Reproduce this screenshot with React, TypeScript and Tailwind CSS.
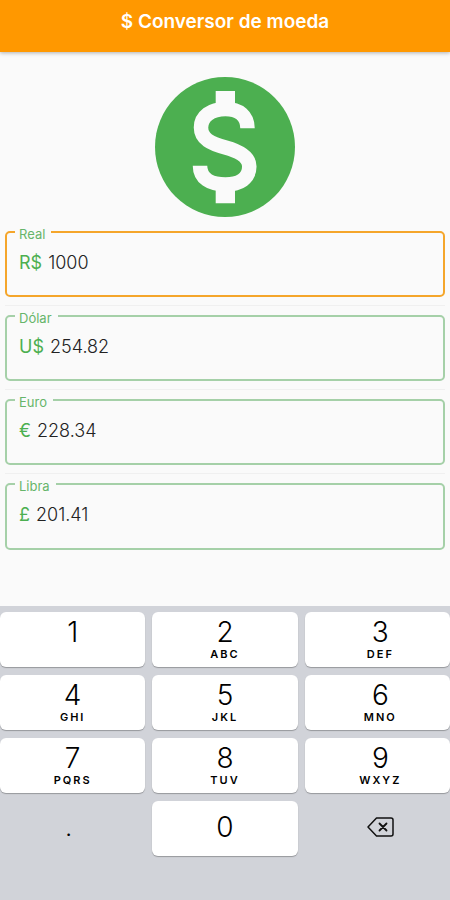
import React, { useState } from "react";
import clsx from "clsx";

const fields = [
  { id: "real", label: "Real", prefix: "R$", value: "1000" },
  { id: "dolar", label: "Dólar", prefix: "U$", value: "254.82" },
  { id: "euro", label: "Euro", prefix: "€", value: "228.34" },
  { id: "libra", label: "Libra", prefix: "£", value: "201.41" },
];

const keys = [
  { digit: "1", letters: "" },
  { digit: "2", letters: "ABC" },
  { digit: "3", letters: "DEF" },
  { digit: "4", letters: "GHI" },
  { digit: "5", letters: "JKL" },
  { digit: "6", letters: "MNO" },
  { digit: "7", letters: "PQRS" },
  { digit: "8", letters: "TUV" },
  { digit: "9", letters: "WXYZ" },
];

function MoneyIcon() {
  return (
    <svg viewBox="0 0 140 140" className="w-[140px] h-[140px]" aria-hidden="true">
      <circle cx="70" cy="70" r="70" fill="#4caf50" />
      <path d="M60.7 14H80V31H60.7zM60.7 108H80V126.3H60.7z" fill="#fafafa" />
      <path
        d="M92.5 51.3C92.5 39 84 32 70.500 32C56 32 46 39.5 46 50.5C46 62 56 66.5 70.5 70.5C85 74.5 94.3 80 94.3 89.5C94.3 101 85 107.5 70.5 107.5C55 107.5 45 101 45 88.7"
        fill="none"
        stroke="#fafafa"
        strokeWidth="14.5"
      />
    </svg>
  );
}

function BackspaceIcon() {
  return (
    <svg
      viewBox="0 0 27 20"
      className="w-[27px] h-5"
      fill="none"
      stroke="#111"
      strokeWidth="1.5"
      strokeLinejoin="round"
      strokeLinecap="round"
      aria-hidden="true"
    >
      <path d="M9.5 1H24Q26 1 26 3V17Q26 19 24 19H9.5L1 10Z" />
      <path d="M12.5 6.5L19.5 13.5M19.5 6.5L12.5 13.5" strokeWidth="1.8" />
    </svg>
  );
}

function App() {
  const [values, setValues] = useState<Record<string, string>>(
    Object.fromEntries(fields.map((f) => [f.id, f.value]))
  );
  const [active, setActive] = useState("real");

  const update = (id: string, value: string) => setValues((prev) => ({ ...prev, [id]: value }));
  const press = (key: string) => update(active, values[active] + key);

  return (
    <div className="min-h-screen flex flex-col bg-[#fafafa] font-['Inter',sans-serif]">
      <header className="h-[52px] bg-[#ff9800] pb-2 flex items-center justify-center shadow-[0_1px_4px_rgba(0,0,0,0.3)]">
        <h1 className="text-[19px] font-semibold text-white">$ Conversor de moeda</h1>
      </header>

      <main className="px-[5px] pt-[25px] pb-6">
        <div className="flex justify-center mb-[5px]">
          <MoneyIcon />
        </div>

        {/* Currency fields */}
        <div className="divide-y divide-[#f0f0f0]">
          {fields.map((f) => (
            <div key={f.id} className="h-[84px] pb-2 flex">
              <fieldset
                className={clsx(
                  "flex-1 min-w-0 rounded-[5px] px-2 border-2",
                  active === f.id ? "border-[#f5a62b]" : "border-[#a5d0a8]"
                )}
              >
                <legend className="px-1 pt-1 text-[13px] leading-4 text-[#66b56a]">
                  <label htmlFor={f.id} className="pr-[2px]">
                    {f.label}
                  </label>
                </legend>
                <div className="flex items-center gap-[6px] px-1 pt-[9px] text-lg leading-6 font-light">
                  <span className="text-[#4caf50] font-normal">{f.prefix}</span>
                  <input
                    id={f.id}
                    inputMode="decimal"
                    value={values[f.id]}
                    onFocus={() => setActive(f.id)}
                    onChange={(e) => update(f.id, e.target.value)}
                    className="flex-1 min-w-0 bg-transparent text-[#222] outline-none"
                  />
                </div>
              </fieldset>
            </div>
          ))}
        </div>
      </main>

      {/* Numeric keypad */}
      <div className="mt-auto bg-[#d1d3d9] pt-[6px] pb-11 grid grid-cols-3 auto-rows-[55px] gap-x-[7px] gap-y-2 text-black">
        {keys.map((k) => (
          <button
            key={k.digit}
            onClick={() => press(k.digit)}
            className="bg-white rounded-md shadow-[0_1px_1px_#96989c] flex flex-col items-center pt-1 nth-[3n]:pl-[6px]"
          >
            <span className="text-[28px] leading-8 font-light">{k.digit}</span>
            <span className="text-[11px] leading-3 font-semibold tracking-[2px]">{k.letters}</span>
          </button>
        ))}
        <button onClick={() => press(".")} className="text-xl leading-8 pr-2">
          .
        </button>
        <button
          onClick={() => press("0")}
          className="bg-white rounded-md shadow-[0_1px_1px_#96989c] text-[28px] leading-8 font-light pb-1"
        >
          0
        </button>
        <button
          aria-label="Apagar"
          onClick={() => update(active, values[active].slice(0, -1))}
          className="flex items-center justify-center pb-1 pl-[6px]"
        >
          <BackspaceIcon />
        </button>
      </div>
    </div>
  );
}

export default App;
